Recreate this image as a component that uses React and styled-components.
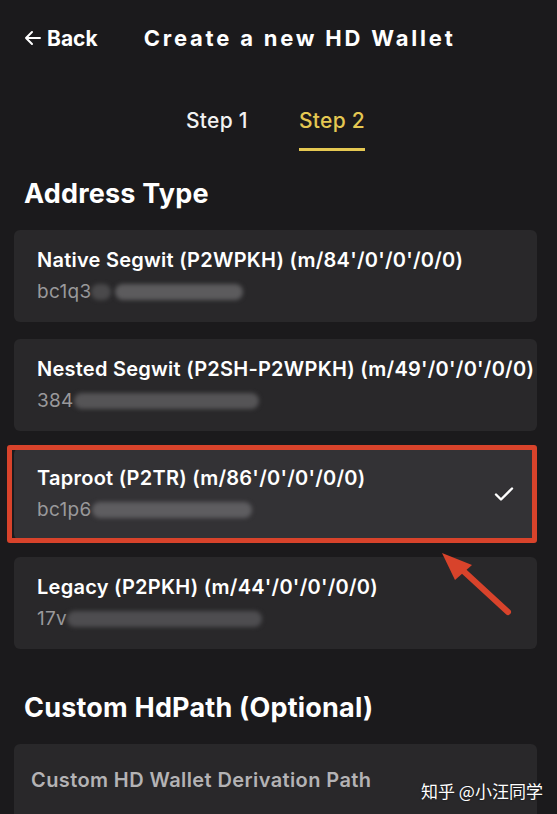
import React from "react";
import styled, { createGlobalStyle } from "styled-components";

const Global = createGlobalStyle`
  html, body { margin: 0; padding: 0; background: #1b1a1c; }
  body { font-family: Inter, "Noto Sans", sans-serif; color: #fff; -webkit-font-smoothing: antialiased; }
  * { box-sizing: border-box; }
`;

const Page = styled.div`
  position: relative;
  width: 557px;
  height: 814px;
  overflow: hidden;
  background: #1b1a1c;
  padding: 0 20px 0 14px;
`;

const Header = styled.header`
  display: flex;
  align-items: center;
  height: 76px;
  padding-left: 10px;
`;

const BackButton = styled.button`
  display: flex;
  align-items: center;
  gap: 5px;
  background: none;
  border: 0;
  padding: 0;
  color: #fff;
  font-family: Inter, sans-serif;
  font-size: 21px;
  font-weight: 700;
  cursor: pointer;
`;

const Title = styled.h1`
  margin: 0 0 0 46px;
  font-size: 22px;
  font-weight: 700;
  letter-spacing: 2.8px;
  color: #fff;
`;

const Tabs = styled.nav`
  display: flex;
  justify-content: center;
  gap: 51px;
  margin-top: 33px;
`;

const Tab = styled.div`
  font-size: 21px;
  font-weight: 500;
  line-height: 24px;
  letter-spacing: 0.3px;
  padding-bottom: 15px;
  color: ${(p) => (p.$active ? "#e5c852" : "#f2f2f2")};
  border-bottom: 3px solid ${(p) => (p.$active ? "#e5c852" : "transparent")};
`;

const SectionTitle = styled.h2`
  margin: ${(p) => p.$top}px 0 0 10px;
  font-size: 27px;
  font-weight: 700;
  line-height: 34px;
  letter-spacing: 0.2px;
  color: #fff;
`;

const List = styled.div`
  display: flex;
  flex-direction: column;
  gap: 17px;
  margin-top: 19px;
`;

const Card = styled.div`
  position: relative;
  display: flex;
  align-items: center;
  justify-content: space-between;
  height: 92px;
  padding: 0 22px 0 23px;
  border-radius: 6px;
  background: ${(p) => (p.$selected ? "#333235" : "#29282a")};
  ${(p) =>
    p.$selected &&
    `
    &::after {
      content: "";
      position: absolute;
      left: -7px;
      right: 0;
      top: -3px;
      bottom: -3px;
      border: 5px solid #d8432b;
      border-radius: 3px;
      pointer-events: none;
    }
  `}
`;

const CardText = styled.div`
  display: flex;
  flex-direction: column;
  gap: 8px;
`;

const CardTitle = styled.div`
  font-size: 20px;
  font-weight: 600;
  line-height: 24px;
  letter-spacing: 0.25px;
  color: #fff;
  white-space: nowrap;
`;

const Address = styled.div`
  display: flex;
  align-items: center;
  font-size: 19px;
  font-weight: 400;
  line-height: 24px;
  letter-spacing: 0.3px;
  color: #9a999b;
`;

const Smudge = styled.span`
  display: inline-block;
  width: ${(p) => p.$w}px;
  height: 16px;
  margin-left: ${(p) => p.$ml || 0}px;
  background: ${(p) => p.$c || "#5c5b5d"};
  border-radius: 8px;
  filter: blur(2px);
`;

const Check = styled.svg`
  width: 22px;
  height: 22px;
  flex: none;
`;

const InputBox = styled.div`
  margin-top: 19px;
  height: 100px;
  border-radius: 6px;
  background: #29282a;
  padding: 24px 17px;
`;

const Placeholder = styled.div`
  font-size: 20px;
  font-weight: 600;
  line-height: 24px;
  letter-spacing: 0.4px;
  color: #b4b3b5;
`;

const Arrow = styled.svg`
  position: absolute;
  left: 436px;
  top: 548px;
  width: 80px;
  height: 72px;
`;

const Watermark = styled.div`
  position: absolute;
  left: 421px;
  top: 778px;
  font-family: "Noto Sans CJK SC", sans-serif;
  font-size: 17px;
  color: #fff;
  text-shadow: 0 0 2px rgba(0, 0, 0, 0.6);
  white-space: nowrap;
`;

const items = [
  { title: "Native Segwit (P2WPKH) (m/84'/0'/0'/0/0)", addr: "bc1q3", smudges: [[20, 0, "#4a494b"], [128, 4]] },
  { title: "Nested Segwit (P2SH-P2WPKH) (m/49'/0'/0'/0/0)", addr: "384", smudges: [[185, 0, "#555456"]] },
  { title: "Taproot (P2TR) (m/86'/0'/0'/0/0)", addr: "bc1p6", smudges: [[160, 0, "#5e5d60"]], selected: true },
  { title: "Legacy (P2PKH) (m/44'/0'/0'/0/0)", addr: "17v", smudges: [[195, 0, "#4e4d50"]] },
];

export default function App() {
  return (
    <>
      <Global />
      <Page>
        <Header>
          <BackButton>
            <svg width="18" height="16" viewBox="0 0 18 16" fill="none" stroke="#fff" strokeWidth="2" strokeLinecap="round" strokeLinejoin="round">
              <path d="M16 8H2M8 2L2 8l6 6" />
            </svg>
            Back
          </BackButton>
          <Title>Create a new HD Wallet</Title>
        </Header>
        <Tabs>
          <Tab>Step 1</Tab>
          <Tab $active>Step 2</Tab>
        </Tabs>
        <SectionTitle $top={26}>Address Type</SectionTitle>
        <List>
          {items.map((it) => (
            <Card key={it.title} $selected={it.selected}>
              <CardText>
                <CardTitle>{it.title}</CardTitle>
                <Address>
                  {it.addr}
                  {it.smudges.map(([w, ml, c], i) => (
                    <Smudge key={i} $w={w} $ml={ml} $c={c} />
                  ))}
                </Address>
              </CardText>
              {it.selected && (
                <Check viewBox="0 0 22 22" fill="none" stroke="#fff" strokeWidth="2.4" strokeLinecap="round" strokeLinejoin="round">
                  <path d="M3 11.5l5 5L19 5.5" />
                </Check>
              )}
            </Card>
          ))}
        </List>
        <SectionTitle $top={42}>Custom HdPath (Optional)</SectionTitle>
        <InputBox>
          <Placeholder>Custom HD Wallet Derivation Path</Placeholder>
        </InputBox>
        <Arrow viewBox="0 0 80 72">
          <path d="M72 64L22 18" stroke="#d8432b" strokeWidth="6" strokeLinecap="round" />
          <path d="M6 5L36 17L19 32Z" fill="#d8432b" />
        </Arrow>
        <Watermark>知乎 @小汪同学</Watermark>
      </Page>
    </>
  );
}
